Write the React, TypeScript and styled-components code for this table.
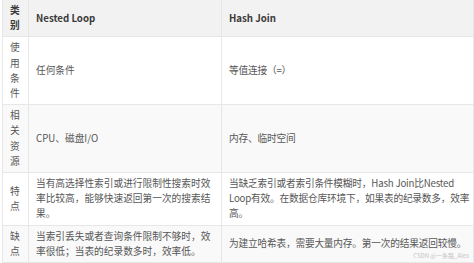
import { createGlobalStyle, styled } from 'styled-components';

const GlobalStyle = createGlobalStyle`
  html, body {
    margin: 0;
    padding: 0;
    background: #ffffff;
    overflow: hidden;
  }
  body {
    font-family: "Noto Sans CJK SC", "Noto Sans", sans-serif;
  }
`;

const Page = styled.div`
  position: relative;
  width: 474px;
  height: 263px;
  padding-left: 2px;
  box-sizing: border-box;
  overflow: hidden;
`;

const Table = styled.table`
  border-collapse: collapse;
  table-layout: fixed;
  width: 472px;
  font-size: 9.7px;
  line-height: 15.2px;
  color: #575757;
`;

const Row = styled.tr<{ $shade?: boolean }>`
  background: ${({ $shade }) => ($shade ? '#f9f9f9' : '#ffffff')};
`;

const HeadRow = styled.tr`
  background: #f2f2f2;
`;

const Cell = styled.td`
  border: 1px solid #e7e7e7;
  border-top: none;
  padding: 3px 6px 3px 7px;
  vertical-align: middle;
  word-break: break-all;
  white-space: pre-line;

  &:last-child {
    padding-right: 1px;
    letter-spacing: -0.2px;
  }
`;

const HeadCell = styled.th`
  border: 1px solid #e7e7e7;
  border-top: none;
  padding: 3px 6px 3px 7px;
  text-align: left;
  font-weight: 700;
  color: #3a3a3a;
  vertical-align: middle;
`;

const Mark = styled.div`
  position: absolute;
  right: 5px;
  bottom: 4px;
  font-size: 6px;
  line-height: 6px;
  color: #c4c4c4;
  font-family: "Noto Sans CJK SC", sans-serif;
`;

const rows = [
  { name: '使用条件', nested: '任何条件', hash: '等值连接（=）' },
  { name: '相关资源', nested: 'CPU、磁盘I/O', hash: '内存、临时空间' },
  {
    name: '特点',
    nested: '当有高选择性索引或进行限制性搜索时效率比较高，能够快速返回第一次的搜索结果。',
    hash: '当缺乏索引或者索引条件模糊时，Hash Join比Nested\nLoop有效。在数据仓库环境下，如果表的纪录数多，效率\n高。',
  },
  {
    name: '缺点',
    nested: '当索引丢失或者查询条件限制不够时，效率很低；当表的纪录数多时，效率低。',
    hash: '为建立哈希表，需要大量内存。第一次的结果返回较慢。',
  },
];

function App() {
  return (
    <Page>
      <GlobalStyle />
      <Table>
        <colgroup>
          <col style={{ width: 26 }} />
          <col style={{ width: 193 }} />
          <col />
        </colgroup>
        <thead>
          <HeadRow>
            <HeadCell>类别</HeadCell>
            <HeadCell>Nested Loop</HeadCell>
            <HeadCell>Hash Join</HeadCell>
          </HeadRow>
        </thead>
        <tbody>
          {rows.map((r, i) => (
            <Row key={r.name} $shade={i % 2 === 1}>
              <Cell>{r.name}</Cell>
              <Cell>{r.nested}</Cell>
              <Cell>{r.hash}</Cell>
            </Row>
          ))}
        </tbody>
      </Table>
      <Mark>CSDN @一条路_Alex</Mark>
    </Page>
  );
}

export default App;
